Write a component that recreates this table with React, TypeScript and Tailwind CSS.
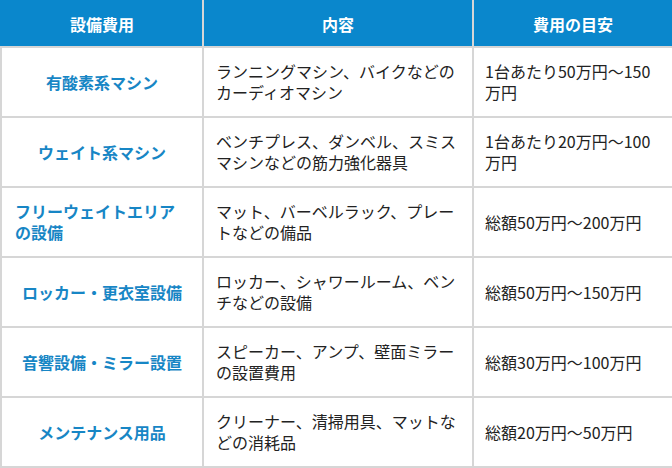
const rows = [
  {
    name: "有酸素系マシン",
    detail: "ランニングマシン、バイクなどのカーディオマシン",
    cost: "1台あたり50万円〜150万円",
  },
  {
    name: "ウェイト系マシン",
    detail: "ベンチプレス、ダンベル、スミスマシンなどの筋力強化器具",
    cost: "1台あたり20万円〜100万円",
  },
  {
    name: "フリーウェイトエリアの設備",
    detail: "マット、バーベルラック、プレートなどの備品",
    cost: "総額50万円〜200万円",
  },
  {
    name: "ロッカー・更衣室設備",
    detail: "ロッカー、シャワールーム、ベンチなどの設備",
    cost: "総額50万円〜150万円",
  },
  {
    name: "音響設備・ミラー設置",
    detail: "スピーカー、アンプ、壁面ミラーの設置費用",
    cost: "総額30万円〜100万円",
  },
  {
    name: "メンテナンス用品",
    detail: "クリーナー、清掃用具、マットなどの消耗品",
    cost: "総額20万円〜50万円",
  },
];

export default function App() {
  return (
    <div
      className="w-[672px] h-[468px] bg-white"
      style={{ fontFamily: '"Noto Sans CJK JP", "Noto Sans", sans-serif' }}
    >
      <table className="w-[672px] table-fixed border-collapse text-[16px] leading-[21px] text-[#222]">
        <colgroup>
          <col className="w-[202px]" />
          <col className="w-[270px]" />
          <col className="w-[200px]" />
        </colgroup>
        <thead>
          <tr className="h-[46px] bg-[#0a87cc] text-white">
            <th className="border-2 border-[#d6d6d6] border-t-[#0a87cc] border-l-[#0a87cc] font-bold">設備費用</th>
            <th className="border-2 border-[#d6d6d6] border-t-[#0a87cc] font-bold">内容</th>
            <th className="border-2 border-[#d6d6d6] border-t-[#0a87cc] border-r-[#0a87cc] font-bold">費用の目安</th>
          </tr>
        </thead>
        <tbody>
          {rows.map((r) => (
            <tr key={r.name} className="h-[70px]">
              <td className="border-2 border-[#d6d6d6] px-[13px] text-center font-bold text-[#1786c5]">
                <span className="inline-block text-left">{r.name}</span>
              </td>
              <td className="border-2 border-[#d6d6d6] pl-[12px] pr-[13px]">{r.detail}</td>
              <td className="border-2 border-[#d6d6d6] pl-[11px] pr-[12px]">{r.cost}</td>
            </tr>
          ))}
        </tbody>
      </table>
    </div>
  );
}
